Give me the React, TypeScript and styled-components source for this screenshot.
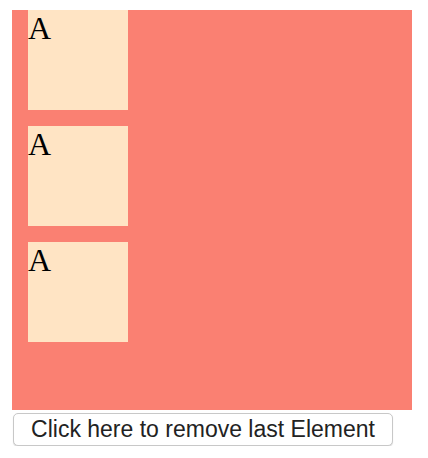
import React, { FC, Fragment } from 'react'
import styled, { createGlobalStyle } from 'styled-components'

const GlobalStyle = createGlobalStyle`
  body {
    margin: 0;
    background: #ffffff;
  }
`
const Page = styled.div`
  display: flex;
  flex-direction: column;
  align-items: flex-start;
  padding: 10px 0 0 12px;
`
const Board = styled.div`
  display: flex;
  flex-direction: column;
  align-items: flex-start;
  gap: 16px;
  width: 400px;
  height: 400px;
  padding-left: 16px;
  box-sizing: border-box;
  background-color: #fa8072;
`
const Tile = styled.div`
  width: 100px;
  height: 100px;
  background-color: #ffe4c4;
  font-family: 'Liberation Serif', serif;
  font-size: 32px;
  line-height: 37px;
  color: #000000;
`
const Button = styled.button`
  margin: 3px 0 0 1px;
  width: 380px;
  height: 33px;
  padding: 0;
  background-color: #ffffff;
  border: 1px solid #c8c8c8;
  border-radius: 5px;
  box-shadow: 0 1px 1px rgba(0, 0, 0, 0.15);
  font-family: 'Liberation Sans', Arial, sans-serif;
  font-size: 23px;
  color: #222222;
  cursor: pointer;
`

const App: FC = () => {
  const items = ['A', 'A', 'A']
  return (
    <Fragment>
      <GlobalStyle />
      <Page>
        <Board>
          {items.map((t, i) => (
            <Tile key={i}>{t}</Tile>
          ))}
        </Board>
        <Button>Click here to remove last Element</Button>
      </Page>
    </Fragment>
  )
}

export default App
